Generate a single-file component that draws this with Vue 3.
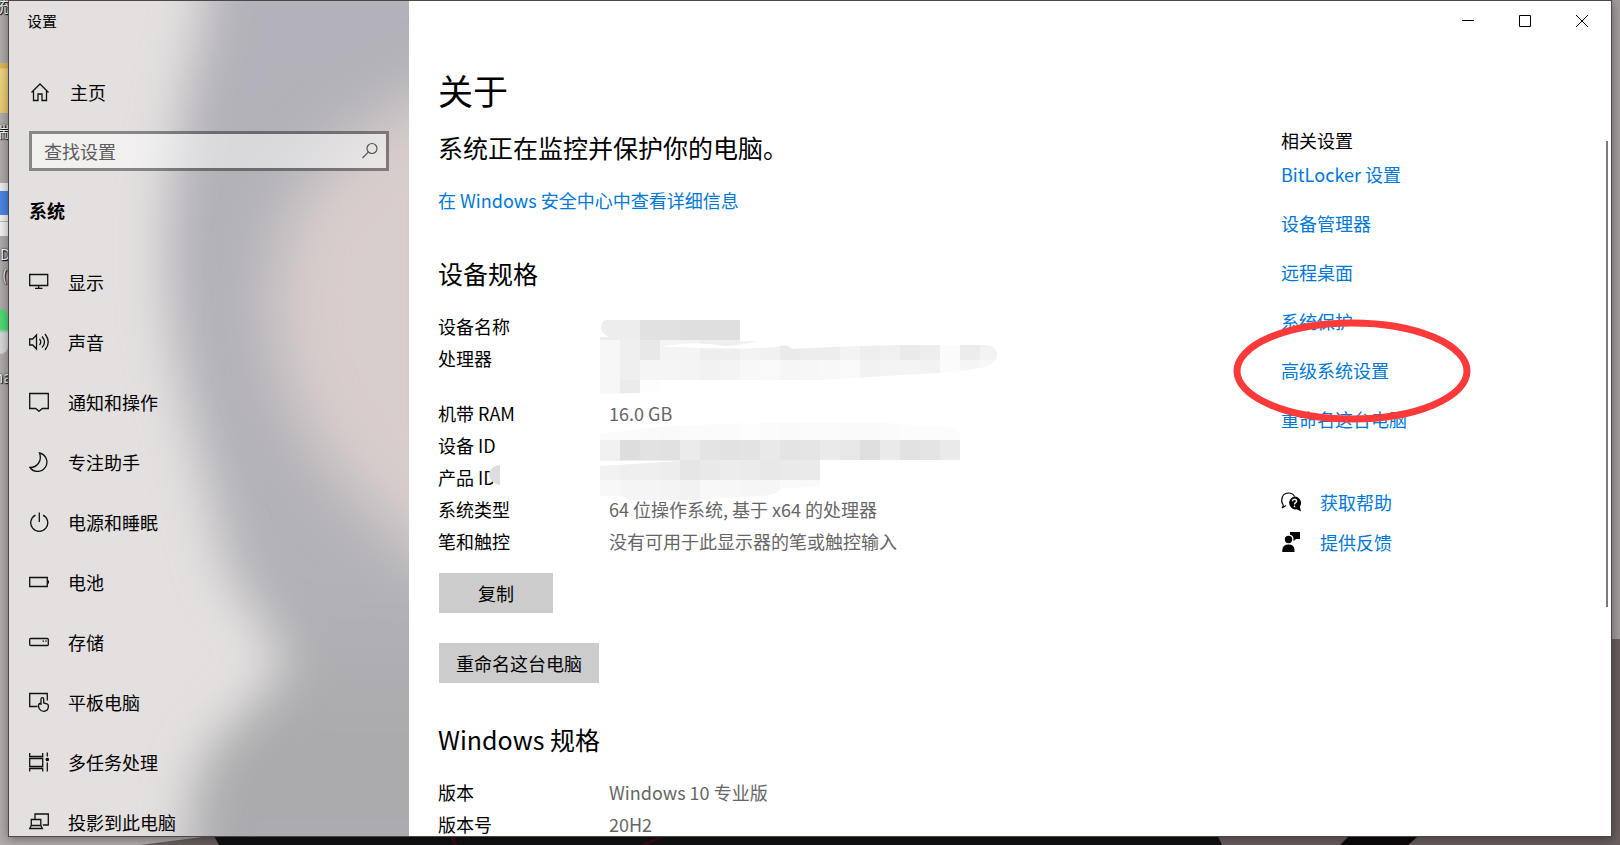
<script setup>
import { ref } from 'vue'

const query = ref('')

const navItems = [
  { icon: 'display', label: '显示' },
  { icon: 'sound', label: '声音' },
  { icon: 'notify', label: '通知和操作' },
  { icon: 'focus', label: '专注助手' },
  { icon: 'power', label: '电源和睡眠' },
  { icon: 'battery', label: '电池' },
  { icon: 'storage', label: '存储' },
  { icon: 'tablet', label: '平板电脑' },
  { icon: 'multitask', label: '多任务处理' },
  { icon: 'project', label: '投影到此电脑' },
]

const deviceSpecs = [
  { name: '设备名称', value: '' },
  { name: '处理器', value: '', tall: true },
  { name: '机带 RAM', value: '16.0 GB' },
  { name: '设备 ID', value: '' },
  { name: '产品 ID', value: '' },
  { name: '系统类型', value: '64 位操作系统, 基于 x64 的处理器' },
  { name: '笔和触控', value: '没有可用于此显示器的笔或触控输入' },
]

const windowsSpecs = [
  { name: '版本', value: 'Windows 10 专业版' },
  { name: '版本号', value: '20H2' },
]

const relatedLinks = ['BitLocker 设置', '设备管理器', '远程桌面', '系统保护', '高级系统设置', '重命名这台电脑']

// Grey levels of the redaction mosaic, one 20px tile per entry.
const upperRows = [
  'ed ed e1 e1 df df df',
  'f7 ef e8 f4 f4 ee ee f3 f1 ea ed ed f3 ee f0 ea ee fb ec f3',
  'f7 ef f5 f5 f4 f2 f4 f8 f9 f6 f7 f8 f9 f2 f4 f4 f2 fb f5 f8',
  'f7 eb fd',
]
const lowerRows = [
  'fb fb fa f9 fb fb fb fd fb fa fb fb fa fa fb fc fc fc',
  'f1 dd e2 e1 eb e4 e2 e3 e9 e4 e5 ea e7 de ea e2 e4 ea',
  'f2 ef ef ed e6 e9 ec eb e8 ea ea',
  'f8 f5 f5 f4 f2 f8 f7 f6 f6 fa fa',
]
const tiles = (rows, top) =>
  rows.flatMap((row, r) =>
    row.split(' ').map((g, c) => ({ x: c * 20, y: top + r * 20, fill: '#' + g + g + g })))
const upperTiles = tiles(upperRows, 0)
const lowerTiles = tiles(lowerRows, 100)
</script>

<template>
  <div class="desktop">
    <svg class="wallpaper" viewBox="0 0 1620 845" preserveAspectRatio="none" aria-hidden="true">
      <rect width="1620" height="845" fill="#b1acac" />
      <rect x="1600" width="20" height="640" fill="#a29d9d" />
      <path d="M1600 639H1620V845H140L210 836H1600Z" fill="#6a5e5e" />
      <path d="M211 830H1215L1222 845H219Z" fill="#121115" />
      <path d="M1355 830H1425L1408 845H1340Z" fill="#0f090c" />
      <path d="M450 836l4 9h3l-3-9zM640 845l20-9h5l-18 9z" fill="#3a0c18" />
    </svg>
    <div class="shortcuts" aria-hidden="true">
      <span class="caption c1">统</span>
      <i class="folder"></i>
      <span class="caption c2">端</span>
      <i class="doc"></i>
      <span class="caption c3">D</span>
      <span class="caption c4">(</span>
      <i class="chat"></i>
      <span class="caption c5">na</span>
    </div>

    <div class="window">
      <aside class="sidebar">
        <svg class="acrylic" viewBox="0 0 400 836" preserveAspectRatio="none" aria-hidden="true">
          <defs>
            <filter id="soft" x="-50%" y="-30%" width="200%" height="160%"><feGaussianBlur stdDeviation="24" /></filter>
            <filter id="softer" x="-80%" y="-50%" width="260%" height="200%"><feGaussianBlur stdDeviation="30" /></filter>
            <linearGradient id="band" x1="0" y1="0" x2="0" y2="1">
              <stop offset="0" stop-color="#b3b1b9" />
              <stop offset="0.65" stop-color="#b3b2b8" />
              <stop offset="0.85" stop-color="#aaaaac" />
              <stop offset="1" stop-color="#adabb2" />
            </linearGradient>
          </defs>
          <rect width="400" height="836" fill="#e3e0df" />
          <path d="M200-60L195 20 178 90 162 180 158 260 165 340 182 420 202 500 218 570 255 625 278 662 245 705 205 745 184 790 175 900H500V-60Z" fill="url(#band)" filter="url(#soft)" />
          <path d="M460 70L350 130 285 200 262 280 268 360 300 440 350 500 460 600Z" fill="#d8cecc" filter="url(#softer)" />
        </svg>

        <div class="app-title">设置</div>
        <a class="home" href="#home">
          <svg class="icon" viewBox="0 0 20 20" aria-hidden="true"><path d="M1.5 10.5L10 2l8.500 8.500M3.500 9v9.500H8V12h4v6.500h4.500V9" /></svg>
          <span>主页</span>
        </a>
        <div class="search">
          <input v-model="query" type="text" placeholder="查找设置" aria-label="查找设置" />
          <svg class="lens" viewBox="0 0 18 18" aria-hidden="true"><circle cx="10" cy="6.500" r="5" /><path d="M6.300 10.200L.5 16" /></svg>
        </div>
        <h2 class="group">系统</h2>
        <nav class="nav" aria-label="系统">
          <a v-for="item in navItems" :key="item.icon" class="nav-item" :href="'#' + item.icon">
            <svg class="icon" viewBox="0 0 20 20" aria-hidden="true">
              <path v-if="item.icon === 'display'" d="M.7 2.500h18v11H.7zM9.700 13.500v3M6 16.300h7.500" />
              <template v-else-if="item.icon === 'sound'">
                <path d="M.7 7h3L7.500 3v14L3.700 13h-3z" />
                <path d="M10.500 7q2.500 3 0 6M13 4.500q5 5.500 0 11M16 2q6.500 8 0 16" />
              </template>
              <path v-else-if="item.icon === 'notify'" d="M.7 1.500h18.600v15h-6L10 19.300 6.700 16.500h-6z" />
              <path v-else-if="item.icon === 'focus'" d="M10.500 1a9.300 9.300 0 1 1-9.500 14.500C8 15.500 13.500 9 10.500 1z" />
              <template v-else-if="item.icon === 'power'">
                <path d="M6.500 3.200a8.500 8.500 0 1 0 7.500 0" /><path d="M10.300.5v9.500" />
              </template>
              <template v-else-if="item.icon === 'battery'">
                <path d="M.7 5.500h17.600v9H.7z" /><path class="solid" d="M18.500 8.500H20v3h-1.500z" />
              </template>
              <template v-else-if="item.icon === 'storage'">
                <rect x=".7" y="6.500" width="18.600" height="7" rx="1" /><path d="M13.500 9.200h1.500M16.200 9.200h1.500" />
              </template>
              <template v-else-if="item.icon === 'tablet'">
                <path d="M8.500 14.500H.7V1.500h17.600v7" />
                <path d="M12 13V7a1.300 1.300 0 0 1 2.700 0v4l3.200.8q1.600.5 1.500 2.500-.2 5-4.700 5-3 0-4.400-2.500-.8-1.500-.8-3.300 0-2 2.500-2.500" />
              </template>
              <template v-else-if="item.icon === 'multitask'">
                <path d="M.7 1v3.500h13V1M.7 19.500V16.500h13v3M.7 6.500h13v8H.7zM18.300.5v4M18.300 10.500v9" />
                <circle class="solid" cx="18.300" cy="7.500" r="1.800" />
              </template>
              <template v-else>
                <path d="M6 7.500V2h13.300v11h-5.500M2.300 13.500V7.500h9.500v6M.7 16.500l1.600-3h9.500l1.600 3z" />
              </template>
            </svg>
            <span>{{ item.label }}</span>
          </a>
        </nav>
      </aside>

      <main class="main">
        <div class="caption-bar">
          <button type="button" aria-label="最小化"><svg viewBox="0 0 12 12"><path d="M0 5.500h12" /></svg></button>
          <button type="button" aria-label="最大化"><svg viewBox="0 0 12 12"><path d="M.5.5h11v11H.5z" /></svg></button>
          <button type="button" aria-label="关闭"><svg viewBox="0 0 12 12"><path d="M0 0l12 12M12 0L0 12" /></svg></button>
        </div>

        <div class="columns">
          <section class="about">
            <h1>关于</h1>
            <p class="status">系统正在监控并保护你的电脑。</p>
            <a class="link" href="#security">在 Windows 安全中心中查看详细信息</a>

            <h2>设备规格</h2>
            <div class="spec-wrap">
              <table class="specs" aria-label="设备规格">
                <tbody>
                  <tr v-for="row in deviceSpecs" :key="row.name" :class="{ tall: row.tall }">
                    <th scope="row">{{ row.name }}</th>
                    <td>{{ row.value }}</td>
                  </tr>
                </tbody>
              </table>
              <svg class="mosaic" viewBox="-120 0 520 190" aria-hidden="true">
                <defs>
                  <clipPath id="upper"><path d="M7 0H140V21l18 0-18 4-15 1Q90 20 62 27H80Q130 30 175 27q13-4 17 2Q240 26 300 25H385Q398 26 397 36 396 45 380 48 360 52 320 54L220 60H60V71L40 73 0 74V17H9Q1 14 1 6 2 0 7 0Z" /></clipPath>
                  <clipPath id="lower"><path d="M0 114Q40 108 60 107L140 103 200 102H280L310 105 355 108 360 112V140H220V167L182 168Q176 176 160 176L120 178 100 180H30L22 176H0V146L80 141H0Z" /></clipPath>
                </defs>
                <g clip-path="url(#upper)" shape-rendering="crispEdges">
                  <rect v-for="(t, i) in upperTiles" :key="i" :x="t.x" :y="t.y" width="20" height="20" :fill="t.fill" />
                </g>
                <g clip-path="url(#lower)" shape-rendering="crispEdges">
                  <rect v-for="(t, i) in lowerTiles" :key="i" :x="t.x" :y="t.y" width="20" height="20" :fill="t.fill" />
                </g>
                <path d="M-107 145V165H-100V145Z" fill="#fff" />
                <path d="M-100 145Q-111 146-111 155-110 163-100 165Z" fill="#dedede" />
              </svg>
            </div>
            <div class="actions">
              <button type="button" class="copy">复制</button>
              <button type="button">重命名这台电脑</button>
            </div>

            <h2>Windows 规格</h2>
            <table class="specs" aria-label="Windows 规格">
              <tbody>
                <tr v-for="row in windowsSpecs" :key="row.name">
                  <th scope="row">{{ row.name }}</th>
                  <td>{{ row.value }}</td>
                </tr>
              </tbody>
            </table>
          </section>

          <section class="related">
            <h3>相关设置</h3>
            <div class="links">
              <a v-for="l in relatedLinks" :key="l" class="link" href="#related">{{ l }}</a>
              <svg class="marker" viewBox="0 0 238 106" aria-hidden="true"><ellipse cx="119" cy="53" rx="115" ry="48" /></svg>
            </div>
            <div class="support">
              <a class="link" href="#help">
                <svg viewBox="0 0 20 20" aria-hidden="true">
                  <path d="M5 13.500L1 16q1.700-2 1-3.500A6.500 6.500 0 0 1 .7 8Q1.200 1 7.500 1q4.500 0 6 3.500" fill="none" stroke="#000" stroke-width="1.200" />
                  <path d="M13.500 4.500a6.500 6.500 0 0 1 5.300 10.200L20 19.500 15.800 17.300A6.500 6.500 0 1 1 13.500 4.500z" fill="#000" />
                  <path d="M11.300 9.200q.2-1.900 2.200-1.900t2.100 1.700q0 1-1.100 1.700-1 .6-1 1.800" fill="none" stroke="#fff" stroke-width="1.400" /><circle cx="13.500" cy="14.400" r=".9" fill="#fff" />
                </svg>
                <span>获取帮助</span>
              </a>
              <a class="link" href="#feedback">
                <svg viewBox="0 0 20 20" aria-hidden="true">
                  <circle cx="7.500" cy="7.500" r="3.700" />
                  <path d="M1.300 20v-2.500q.7-5 6.200-5t6 5V20zM9 0h10v7h-4l-2.500 2.300V7Q12.500 3.500 9 2.800z" />
                </svg>
                <span>提供反馈</span>
              </a>
            </div>
          </section>
        </div>
        <div class="scroll-thumb"></div>
      </main>
    </div>
  </div>
</template>

<style>
html, body { margin: 0; overflow: hidden; }
</style>

<style scoped>
.desktop {
  position: relative;
  box-sizing: border-box;
  height: 100vh;
  padding: 0 8px 8px;
  overflow: hidden;
  font-family: "Noto Sans CJK SC", sans-serif;
  font-size: 18px;
  line-height: 24px;
  color: #000;
}
.wallpaper { position: absolute; inset: 0; width: 100%; height: 100%; }
.shortcuts { position: absolute; left: 0; top: 0; width: 8px; height: 100%; overflow: hidden; }
.caption { position: absolute; left: -6px; font-size: 15px; line-height: 20px; color: #fff; text-shadow: 1px 1px 1px #000, 0 0 2px #000; }
.c1 { top: -4px; }
.c2 { top: 121px; }
.shortcuts .c3 { top: 244px; left: 0; }
.shortcuts .c4 { top: 265px; left: 2px; }
.c5 { top: 367px; }
.folder, .doc, .chat { position: absolute; left: 0; width: 8px; }
.folder { top: 63px; height: 50px; background: linear-gradient(#dcb95c 10%, #f0d787 12%, #eacb6c); }
.doc { top: 183px; height: 53px; background: linear-gradient(#eee 8px, #4d86e8 8px, #4d86e8 32px, #f2f2f2 32px, #f2f2f2 38px, #bbb 38px, #bbb 39px, #f2f2f2 39px); }
.chat { top: 309px; height: 45px; border-radius: 0 22px 22px 0; background: linear-gradient(#4fdc72 20px, #d8d8d8 24px); }

.window {
  position: relative;
  display: flex;
  box-sizing: border-box;
  height: 100%;
  border: 1px solid #4a4747;
  background: #fff;
  box-shadow: 0 2px 10px rgba(0, 0, 0, .4);
}
a { text-decoration: none; color: inherit; }
h1, h2, h3, p { margin: 0; font-weight: 400; }

.sidebar {
  position: relative;
  display: flex;
  flex-direction: column;
  flex: 0 0 400px;
  overflow: hidden;
  background: #e3e0df;
}
.sidebar > * { position: relative; flex-shrink: 0; }
.sidebar > .acrylic { position: absolute; inset: 0; width: 100%; height: 100%; }
.app-title { padding: 8px 18px; font-size: 15px; }
.icon { width: 20px; height: 20px; fill: none; stroke: #111; stroke-width: 1.3; flex: none; }
.solid { fill: #111; stroke: none; }
.home { display: flex; align-items: center; gap: 20px; margin-top: 39px; padding: 0 20px 0 21px; }
.search {
  display: flex;
  align-items: center;
  box-sizing: border-box;
  height: 40px;
  margin: 27px 20px 0;
  border: 3px solid rgba(0, 0, 0, .4);
  background: rgba(255, 255, 255, .5);
  background-clip: padding-box;
}
.search input {
  flex: 1;
  min-width: 0;
  padding: 0 12px;
  border: 0;
  outline: 0;
  background: transparent;
  font: inherit;
  color: #000;
}
.search input::placeholder { color: #5d5c5c; opacity: 1; }
.lens { width: 18px; height: 18px; margin-right: 6px; fill: none; stroke: #555; stroke-width: 1.2; }
.group { margin: 27px 20px 0; font-size: 18px; font-weight: 700; }
.nav { margin-top: 30px; }
.nav-item { display: flex; align-items: center; gap: 19px; height: 60px; padding: 0 20px; }

.main { position: relative; display: flex; flex-direction: column; flex: 1; min-width: 0; overflow: hidden; }
.caption-bar { display: flex; justify-content: flex-end; flex: none; height: 40px; padding-right: 1px; }
.caption-bar button {
  display: flex;
  align-items: center;
  justify-content: center;
  width: 57px;
  padding: 0;
  border: 0;
  background: none;
}
.caption-bar svg { width: 12px; height: 12px; fill: none; stroke: #000; stroke-width: 1; }
.columns { display: flex; flex: 1; min-height: 0; }
.about { flex: 1; min-width: 0; padding: 26px 0 0 29px; }
.about h1 { font-size: 35px; line-height: 46px; }
.status { margin-top: 18px; font-size: 25px; line-height: 32px; }
.link { display: block; color: #0078d7; }
.about > .link { margin-top: 25px; }
.about h2 { margin: 45px 0 21px; font-size: 25px; line-height: 32px; }
.spec-wrap { position: relative; }
.specs { border-collapse: collapse; }
.specs th, .specs td { height: 32px; padding: 0; line-height: 32px; font-weight: 400; text-align: left; vertical-align: top; white-space: nowrap; }
.specs th { min-width: 171px; }
.specs td { color: #666; }
.specs .tall th { height: 55px; }
.mosaic { position: absolute; left: 42px; top: 10px; width: 520px; height: 190px; }
.actions { display: flex; flex-direction: column; align-items: flex-start; gap: 30px; margin: 16px 0 0 1px; }
.actions button { height: 40px; padding: 0 17px; border: 0; background: #ccc; font: inherit; color: #000; }
.actions .copy { padding: 0 39px; }
.actions + h2 { margin-top: 40px; }

.related { flex: 0 0 330px; padding-top: 87px; }
.related h3 { font-size: 18px; }
.links { position: relative; display: flex; flex-direction: column; gap: 25px; margin-top: 10px; }
.marker { position: absolute; left: -48px; top: 156px; width: 238px; height: 106px; fill: none; stroke: #fc3a3a; stroke-width: 7; pointer-events: none; }
.support { display: flex; flex-direction: column; gap: 16px; margin-top: 59px; }
.support .link { display: flex; align-items: center; gap: 19px; }
.support svg { width: 20px; height: 20px; fill: #000; }
.scroll-thumb { position: absolute; right: 3px; top: 140px; width: 2px; height: 466px; background: #7a7a7a; }
</style>
